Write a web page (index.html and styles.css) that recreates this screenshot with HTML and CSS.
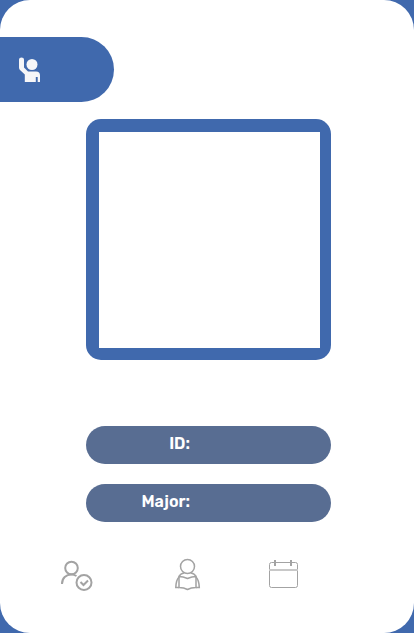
FILE: index.html
```html
<!DOCTYPE html>
<html lang="en">
<head>
<meta charset="utf-8">
<meta name="viewport" content="width=device-width, initial-scale=1">
<title>Student card</title>
<link rel="stylesheet" href="styles.css">
</head>
<body>
<main class="card">
  <header class="header">
    <button class="tab" type="button" aria-label="Raise hand">
      <svg class="hand-icon" width="22" height="26" viewBox="0 0 22 26" aria-hidden="true">
        <path d="M0 2.500Q0 .5 2.500 .5T5 2.500V10.500L9 14.500H17Q21 14.500 21 18.500V25H18.700V20H16.800V25H5.800V17.500L1 13Q0 12 0 10.500Z"/>
        <circle cx="13" cy="7.500" r="5.500"/>
      </svg>
    </button>
  </header>
  <div class="content">
    <div class="frame"><div class="photo"></div></div>
    <form class="fields">
      <div class="field">
        <label class="label" for="student-id">ID:</label>
        <input class="value" id="student-id" type="text">
      </div>
      <div class="field">
        <label class="label" for="major">Major:</label>
        <input class="value" id="major" type="text">
      </div>
    </form>
  </div>
  <nav class="nav">
    <button class="nav-button" type="button" aria-label="Attendance">
      <svg width="32" height="34" viewBox="0 0 32 34" aria-hidden="true" fill="none" stroke="#a3a3a3" stroke-width="2">
        <circle cx="10.500" cy="10" r="6.300"/>
        <path d="M1 26C1 20 5 16.500 10.500 16.500Q13 16.500 15.500 18"/>
        <circle cx="23" cy="24.500" r="7.500"/>
        <path d="M19.500 24L22.500 27L27 22.500"/>
      </svg>
    </button>
    <button class="nav-button" type="button" aria-label="Study">
      <svg width="26" height="34" viewBox="0 0 26 34" aria-hidden="true" fill="none" stroke="#a3a3a3" stroke-width="1.500">
        <circle cx="12.500" cy="8.500" r="7"/>
        <path d="M4 18.500Q8 18.500 12.500 20.500Q17 18.500 21 18.500V29.500Q16 29.500 12.500 31.500Q9 29.500 4 29.500Z"/>
        <path d="M4 18.500Q5.500 15.500 9 15M21 18.500Q19.500 15.500 16 15M4 19Q1 22 .8 29.500H4M21 19Q24 22 24.300 29.500H21"/>
      </svg>
    </button>
    <button class="nav-button" type="button" aria-label="Calendar">
      <svg width="31" height="34" viewBox="0 0 31 34" aria-hidden="true" fill="none" stroke="#a3a3a3">
        <rect x="1.500" y="4.500" width="28" height="25" rx="2"/>
        <path d="M1 12H30" stroke="#c8c8c8" stroke-width="2"/>
        <path d="M7 2V8M23 2V8" stroke-width="2"/>
      </svg>
    </button>
  </nav>
</main>
</body>
</html>
```
FILE: styles.css
```css
* {
  box-sizing: border-box;
}

body {
  margin: 0;
  background: #4069ad;
  font-family: Rubik, Roboto, "Liberation Sans", sans-serif;
}

.card {
  min-height: 100vh;
  padding-top: 37px;
  background: #fff;
  border-radius: 30px;
}

button {
  border: 0;
  background: none;
  cursor: pointer;
}

.tab {
  display: flex;
  align-items: center;
  width: 114px;
  height: 65px;
  padding: 0 19px;
  border-radius: 0 33px 33px 0;
  background: #4069ad;
}

.hand-icon {
  fill: #f6f6f8;
}

.content {
  margin: 17px 83px 0 86px;
}

.frame {
  padding: 13px 11px 12px 13px;
  border-radius: 15px;
  background: #4069ad;
}

.photo {
  aspect-ratio: 221 / 216;
  background: #fff;
}

.fields {
  display: grid;
  gap: 20px;
  margin-top: 66px;
}

.field {
  display: grid;
  grid-template-columns: 104px 1fr;
  align-items: center;
  height: 38px;
  padding-bottom: 2px;
  border-radius: 19px;
  background: #586d92;
  color: #fff;
}

.label {
  text-align: right;
  font-size: 16px;
  line-height: 20px;
  font-weight: 600;
}

.value {
  min-width: 0;
  margin-right: 20px;
  padding: 0 8px;
  border: 0;
  outline: 0;
  background: none;
  color: inherit;
  font: inherit;
}

.nav {
  display: grid;
  grid-template-columns: 114fr 93fr 146fr;
  padding: 36px 0 32px 61px;
}

.nav-button {
  display: flex;
  justify-self: start;
  padding: 0;
}
```
